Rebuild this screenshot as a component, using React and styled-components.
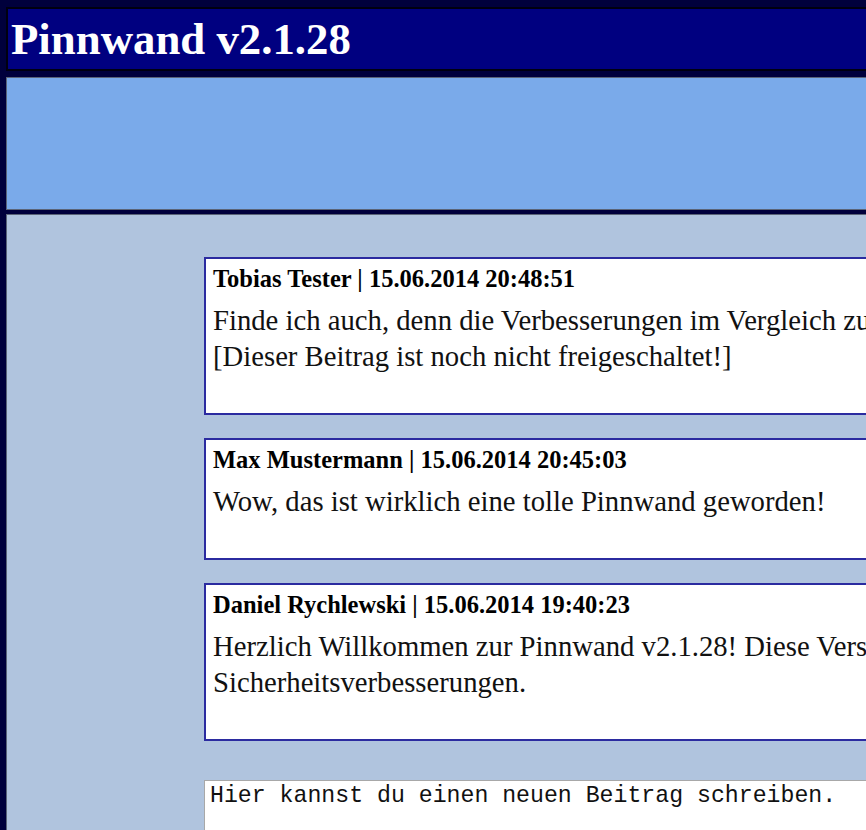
import React from "react";
import styled, { createGlobalStyle } from "styled-components";

const Global = createGlobalStyle`
  html, body {
    margin: 0;
    padding: 0;
    overflow: hidden;
    background: #00003c;
  }
  body {
    font-family: "Liberation Serif", "Times New Roman", serif;
  }
`;

const Page = styled.div`
  width: 1400px;
  min-height: 830px;
  padding: 7px 0 0 6px;
  display: flex;
  flex-direction: column;
  gap: 5px;
  box-sizing: border-box;
`;

const TitleBar = styled.header`
  height: 55px;
  background: #000080;
  border: 2px solid #000010;
  padding: 5px 0 0 3px;
  box-sizing: content-box;
`;

const Title = styled.h1`
  margin: 0;
  font-family: "Liberation Serif", "Times New Roman", serif;
  font-weight: bold;
  font-size: 44.8px;
  line-height: 50px;
  color: #ffffff;
`;

const Band = styled.div`
  height: 131px;
  background: #7aaaea;
  border: 1px solid #5a6478;
  margin-top: 1px;
`;

const Content = styled.main`
  flex: 1;
  background: #b0c4de;
  border: 1px solid #5a6478;
  border-bottom: none;
  margin-top: -1px;
  padding: 42px 0 0 197px;
  display: flex;
  flex-direction: column;
  gap: 23px;
  min-height: 620px;
`;

const Post = styled.article`
  width: 1100px;
  background: #ffffff;
  border: 2px solid #2b2ba0;
  padding: 6px 7px 39px 7px;
`;

const PostHeader = styled.div`
  font-weight: bold;
  font-size: 24.5px;
  line-height: 28px;
  color: #000;
`;

const PostBody = styled.p`
  margin: 9px 0 0 0;
  font-size: 28.7px;
  line-height: 36px;
  color: #111;
`;

const Composer = styled.textarea`
  margin-top: 16px;
  width: 1100px;
  height: 200px;
  border: 1px solid #a8a8a8;
  background: #ffffff;
  padding: 2px 5px;
  font-family: "Liberation Mono", "Courier New", monospace;
  font-size: 23.2px;
  line-height: 26px;
  color: #111;
  resize: none;
  outline: none;
`;

const posts = [
  {
    author: "Tobias Tester",
    date: "15.06.2014 20:48:51",
    lines: [
      "Finde ich auch, denn die Verbesserungen im Vergleich zur alten Version sind super!",
      "[Dieser Beitrag ist noch nicht freigeschaltet!]",
    ],
  },
  {
    author: "Max Mustermann",
    date: "15.06.2014 20:45:03",
    lines: ["Wow, das ist wirklich eine tolle Pinnwand geworden!"],
  },
  {
    author: "Daniel Rychlewski",
    date: "15.06.2014 19:40:23",
    lines: [
      "Herzlich Willkommen zur Pinnwand v2.1.28! Diese Version bringt viele neue",
      "Sicherheitsverbesserungen.",
    ],
  },
];

export default function App() {
  return (
    <>
      <Global />
      <Page>
        <TitleBar>
          <Title>Pinnwand v2.1.28</Title>
        </TitleBar>
        <Band />
        <Content>
          {posts.map((p) => (
            <Post key={p.date}>
              <PostHeader>
                {p.author} | {p.date}
              </PostHeader>
              <PostBody>
                {p.lines.map((l, i) => (
                  <React.Fragment key={i}>
                    {i > 0 && <br />}
                    {l}
                  </React.Fragment>
                ))}
              </PostBody>
            </Post>
          ))}
          <Composer defaultValue="Hier kannst du einen neuen Beitrag schreiben." />
        </Content>
      </Page>
    </>
  );
}
